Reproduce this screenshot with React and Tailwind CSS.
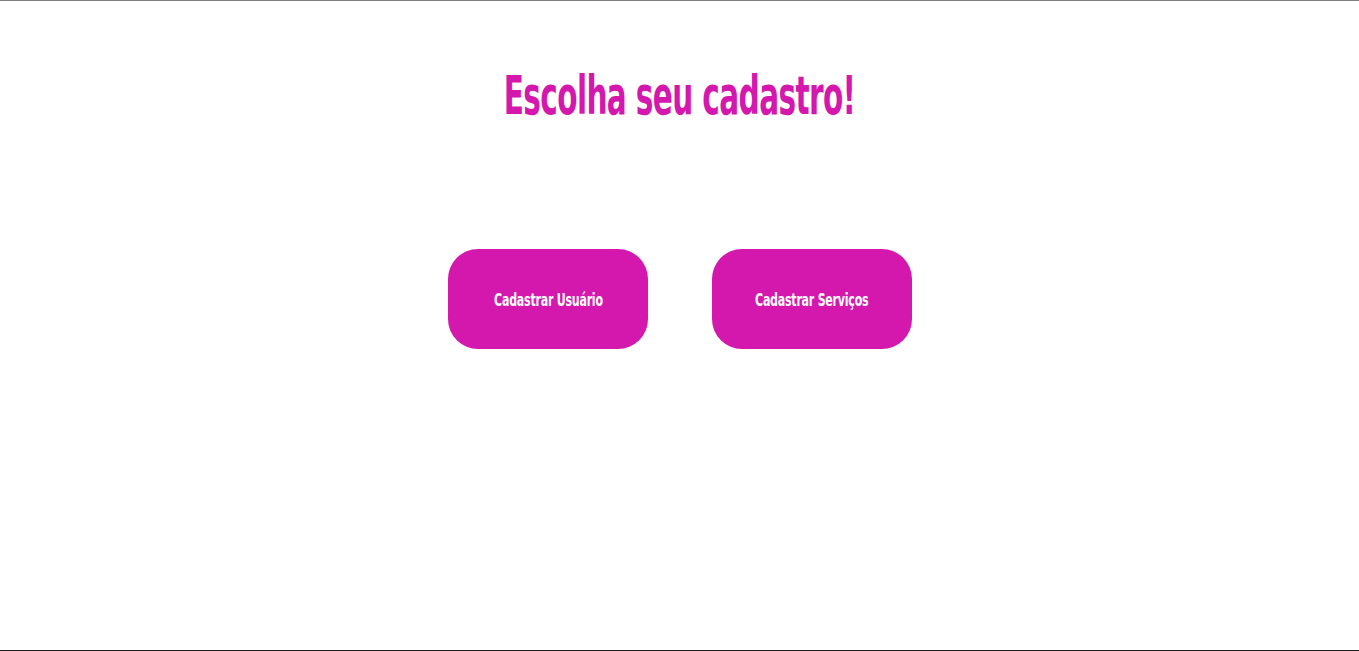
import React from 'react';

const CadastroEscolha = () => {
    const opcoes = ['Cadastrar Usuário', 'Cadastrar Serviços'];

    return (
        <div
            className="h-[651px] flex flex-col items-center border-t border-b border-t-[#7f7f7f] border-b-[#1f1f1f] bg-white"
            style={{ fontFamily: '"Liberation Sans Narrow", "DejaVu Sans Condensed", "Liberation Sans", sans-serif' }}
        >
            {/* Titulo */}
            <h1 className="mt-[63px] h-[64px] leading-[64px] text-[53px] font-bold text-[#d418ad] tracking-[-1px] scale-x-[0.62]">
                Escolha seu cadastro!
            </h1>

            {/* Botoes */}
            <div className="mt-[121px] flex gap-16 pl-px">
                {opcoes.map((opcao) => (
                    <button
                        key={opcao}
                        className="w-[200px] h-[100px] pt-1 rounded-[30px] bg-[#d418ad] text-white text-[17px] font-bold tracking-[-0.3px]"
                    >
                        <span className="inline-block scale-x-[0.72]">{opcao}</span>
                    </button>
                ))}
            </div>
        </div>
    );
};

export default function App() {
    return <CadastroEscolha />;
}
